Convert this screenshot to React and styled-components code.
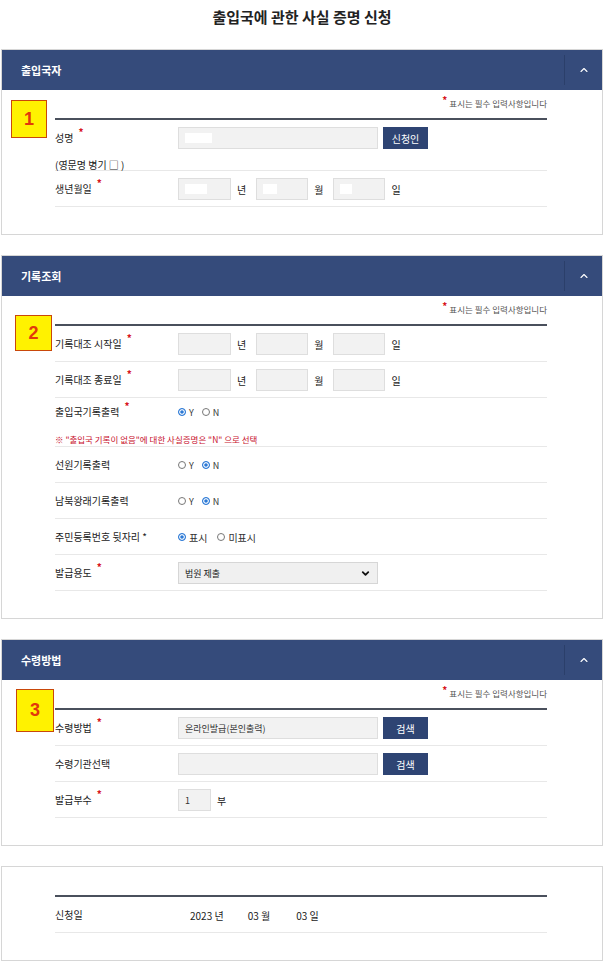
import React from 'react';
import styled, { createGlobalStyle } from 'styled-components';
import { ChevronUp, ChevronDown } from 'lucide-react';

const Global = createGlobalStyle`
  html, body { margin: 0; padding: 0; background: #fff; }
  body { font-family: "Noto Sans CJK KR", "Noto Sans", sans-serif; color: #333; }
  * { box-sizing: border-box; }
`;

const Page = styled.div`
  width: 604px;
  padding: 0 1px;
`;

const Title = styled.h1`
  margin: 0;
  height: 49px;
  padding-top: 6px;
  text-align: center;
  font-size: 15px;
  font-weight: 700;
  line-height: 22px;
  color: #222;
`;

const Panel = styled.section`
  position: relative;
  border: 1px solid #d6d6d6;
  margin-bottom: 20px;
`;

const Header = styled.div`
  height: 40px;
  background: #354b7b;
  display: flex;
  align-items: center;
  justify-content: space-between;
  padding-left: 19px;
`;

const HeaderTitle = styled.h2`
  margin: 0;
  font-size: 11px;
  font-weight: 700;
  color: #fff;
`;

const Toggle = styled.div`
  width: 38px;
  height: 30px;
  border-left: 1px solid #2b3f6a;
  display: flex;
  align-items: center;
  justify-content: center;
  color: #fff;
`;

const Body = styled.div`
  padding: 0 55px 27px 53px;
`;

const Note = styled.div`
  height: 28px;
  padding-top: 8px;
  text-align: right;
  font-size: 8.5px;
  line-height: 10px;
  color: #555;
`;

const Table = styled.div`
  border-top: 2px solid #4a505c;
`;

const Row = styled.div`
  display: grid;
  grid-template-columns: 123px 1fr;
  align-items: center;
  padding: ${(p) => (p.$tight ? '3px 0 2px' : '7px 0 6px')};
  border-bottom: 1px solid #e8e8e8;
`;

const Label = styled.div`
  font-size: 10px;
  line-height: 22px;
  color: #222;
  white-space: nowrap;
`;

const Req = styled.span`
  color: #d7141a;
  font-size: 10px;
  font-weight: 700;
  position: relative;
  top: -6px;
  margin-left: 5px;
`;

const Cell = styled.div`
  display: flex;
  align-items: center;
  padding-left: ${(p) => p.$indent || 0}px;
  font-size: 10px;
  color: #333;
`;

const Caption = styled.div`
  grid-column: 1 / -1;
  margin-top: ${(p) => p.$gap || 12}px;
  font-size: ${(p) => (p.$red ? '8.5px' : '10px')};
  line-height: 10px;
  color: ${(p) => (p.$red ? '#c8102e' : '#222')};
`;

const Box = styled.div`
  width: ${(p) => p.$w}px;
  height: 22px;
  background: #f2f2f2;
  border: 1px solid #dedede;
  display: flex;
  align-items: center;
  padding-left: ${(p) => p.$pad ?? 6}px;
  font-size: 9px;
  color: #333;
`;

const Mask = styled.span`
  display: block;
  width: ${(p) => p.$w}px;
  height: 10px;
  background: #fff;
`;

const Unit = styled.span`
  margin: 0 ${(p) => p.$after ?? 10}px 0 6px;
  font-size: 10px;
  color: #222;
`;

const Button = styled.button`
  width: 45px;
  height: 22px;
  margin-left: 5px;
  border: 0;
  background: #2e4473;
  color: #fff;
  font-family: inherit;
  font-size: 10px;
  padding: 0;
`;

const Options = styled.div`
  display: flex;
  align-items: center;
  gap: ${(p) => p.$gap || 8}px;
  height: 22px;
`;

const Option = styled.label`
  display: flex;
  align-items: center;
  gap: 3px;
  font-size: ${(p) => p.$size || 9}px;
  color: #333;
`;

const Dot = styled.span`
  width: 8px;
  height: 8px;
  border-radius: 50%;
  border: 1px solid ${(p) => (p.$on ? '#2b79d6' : '#777')};
  background: ${(p) => (p.$on ? '#2b79d6' : '#fff')};
  box-shadow: ${(p) => (p.$on ? 'inset 0 0 0 1.2px #fff' : 'none')};
`;

const Select = styled.div`
  width: 200px;
  height: 22px;
  background: #f0f0f0;
  border: 1px solid #d6d6d6;
  display: flex;
  align-items: center;
  justify-content: space-between;
  padding: 0 6px 0 6px;
  font-size: 9px;
  color: #222;
`;

const Badge = styled.div`
  position: absolute;
  left: ${(p) => p.$x}px;
  top: ${(p) => p.$y}px;
  width: ${(p) => p.$w}px;
  height: ${(p) => p.$h}px;
  background: #fff200;
  border: 1px solid #c9480a;
  display: flex;
  align-items: center;
  justify-content: center;
  font-family: "Liberation Sans", Arial, sans-serif;
  font-size: 18px;
  font-weight: 700;
  color: #e2380b;
`;

const DateText = styled.span`
  font-size: 10px;
  color: #222;
  margin-right: ${(p) => p.$after || 0}px;
`;

function Radio({ on, children, size }) {
  return (
    <Option $size={size}>
      <Dot $on={on} />
      {children}
    </Option>
  );
}

function SectionHeader({ title }) {
  return (
    <Header>
      <HeaderTitle>{title}</HeaderTitle>
      <Toggle>
        <ChevronUp size={12} strokeWidth={2.2} />
      </Toggle>
    </Header>
  );
}

function RequiredNote() {
  return (
    <Note>
      <Req style={{ top: -3, marginLeft: 0, marginRight: 2 }}>*</Req>표시는 필수 입력사항입니다
    </Note>
  );
}

function DateInputs({ masks }) {
  const units = ['년', '월', '일'];
  const widths = [53, 52, 52];
  return (
    <Cell>
      {units.map((u, i) => (
        <React.Fragment key={u}>
          <Box $w={widths[i]}>{masks && <Mask $w={masks[i]} />}</Box>
          <Unit $after={i < 2 ? 10 : 0}>{u}</Unit>
        </React.Fragment>
      ))}
    </Cell>
  );
}

export default function App() {
  return (
    <Page>
      <Global />
      <Title>출입국에 관한 사실 증명 신청</Title>

      <Panel>
        <SectionHeader title="출입국자" />
        <Body>
          <RequiredNote />
          <Table>
            <Row style={{ paddingBottom: 0 }}>
              <Label>
                성명<Req>*</Req>
              </Label>
              <Cell>
                <Box $w={200}>
                  <Mask $w={27} />
                </Box>
                <Button>신청인</Button>
              </Cell>
              <Caption $gap={11}>(영문명 병기 □ )</Caption>
            </Row>
            <Row>
              <Label>
                생년월일<Req>*</Req>
              </Label>
              <DateInputs masks={[22, 14, 12]} />
            </Row>
          </Table>
        </Body>
        <Badge $x={9} $y={50} $w={36} $h={38}>1</Badge>
      </Panel>

      <Panel>
        <SectionHeader title="기록조회" />
        <Body>
          <RequiredNote />
          <Table>
            <Row>
              <Label>
                기록대조 시작일<Req>*</Req>
              </Label>
              <DateInputs />
            </Row>
            <Row>
              <Label>
                기록대조 종료일<Req>*</Req>
              </Label>
              <DateInputs />
            </Row>
            <Row $tight>
              <Label>
                출입국기록출력<Req>*</Req>
              </Label>
              <Cell>
                <Options>
                  <Radio on>Y</Radio>
                  <Radio>N</Radio>
                </Options>
              </Cell>
              <Caption $red $gap={11}>※ "출입국 기록이 없음"에 대한 사실증명은 "N" 으로 선택</Caption>
            </Row>
            <Row>
              <Label>선원기록출력</Label>
              <Cell>
                <Options>
                  <Radio>Y</Radio>
                  <Radio on>N</Radio>
                </Options>
              </Cell>
            </Row>
            <Row>
              <Label>남북왕래기록출력</Label>
              <Cell>
                <Options>
                  <Radio>Y</Radio>
                  <Radio on>N</Radio>
                </Options>
              </Cell>
            </Row>
            <Row>
              <Label>주민등록번호 뒷자리 *</Label>
              <Cell>
                <Options $gap={10}>
                  <Radio on size={10}>표시</Radio>
                  <Radio size={10}>미표시</Radio>
                </Options>
              </Cell>
            </Row>
            <Row>
              <Label>
                발급용도<Req>*</Req>
              </Label>
              <Cell>
                <Select>
                  <span>법원 제출</span>
                  <ChevronDown size={11} strokeWidth={4} color="#111" />
                </Select>
              </Cell>
            </Row>
          </Table>
        </Body>
        <Badge $x={13} $y={59} $w={37} $h={36}>2</Badge>
      </Panel>

      <Panel>
        <SectionHeader title="수령방법" />
        <Body>
          <RequiredNote />
          <Table>
            <Row>
              <Label>
                수령방법<Req>*</Req>
              </Label>
              <Cell>
                <Box $w={200}>온라인발급(본인출력)</Box>
                <Button>검색</Button>
              </Cell>
            </Row>
            <Row>
              <Label>수령기관선택</Label>
              <Cell>
                <Box $w={200} />
                <Button>검색</Button>
              </Cell>
            </Row>
            <Row>
              <Label>
                발급부수<Req>*</Req>
              </Label>
              <Cell>
                <Box $w={33}>1</Box>
                <Unit>부</Unit>
              </Cell>
            </Row>
          </Table>
        </Body>
        <Badge $x={14} $y={49} $w={38} $h={43}>3</Badge>
      </Panel>

      <Panel>
        <Body>
          <Note />
          <Table>
            <Row>
              <Label>신청일</Label>
              <Cell $indent={12}>
                <DateText $after={24}>2023 년</DateText>
                <DateText $after={26}>03 월</DateText>
                <DateText>03 일</DateText>
              </Cell>
            </Row>
          </Table>
        </Body>
      </Panel>
    </Page>
  );
}
